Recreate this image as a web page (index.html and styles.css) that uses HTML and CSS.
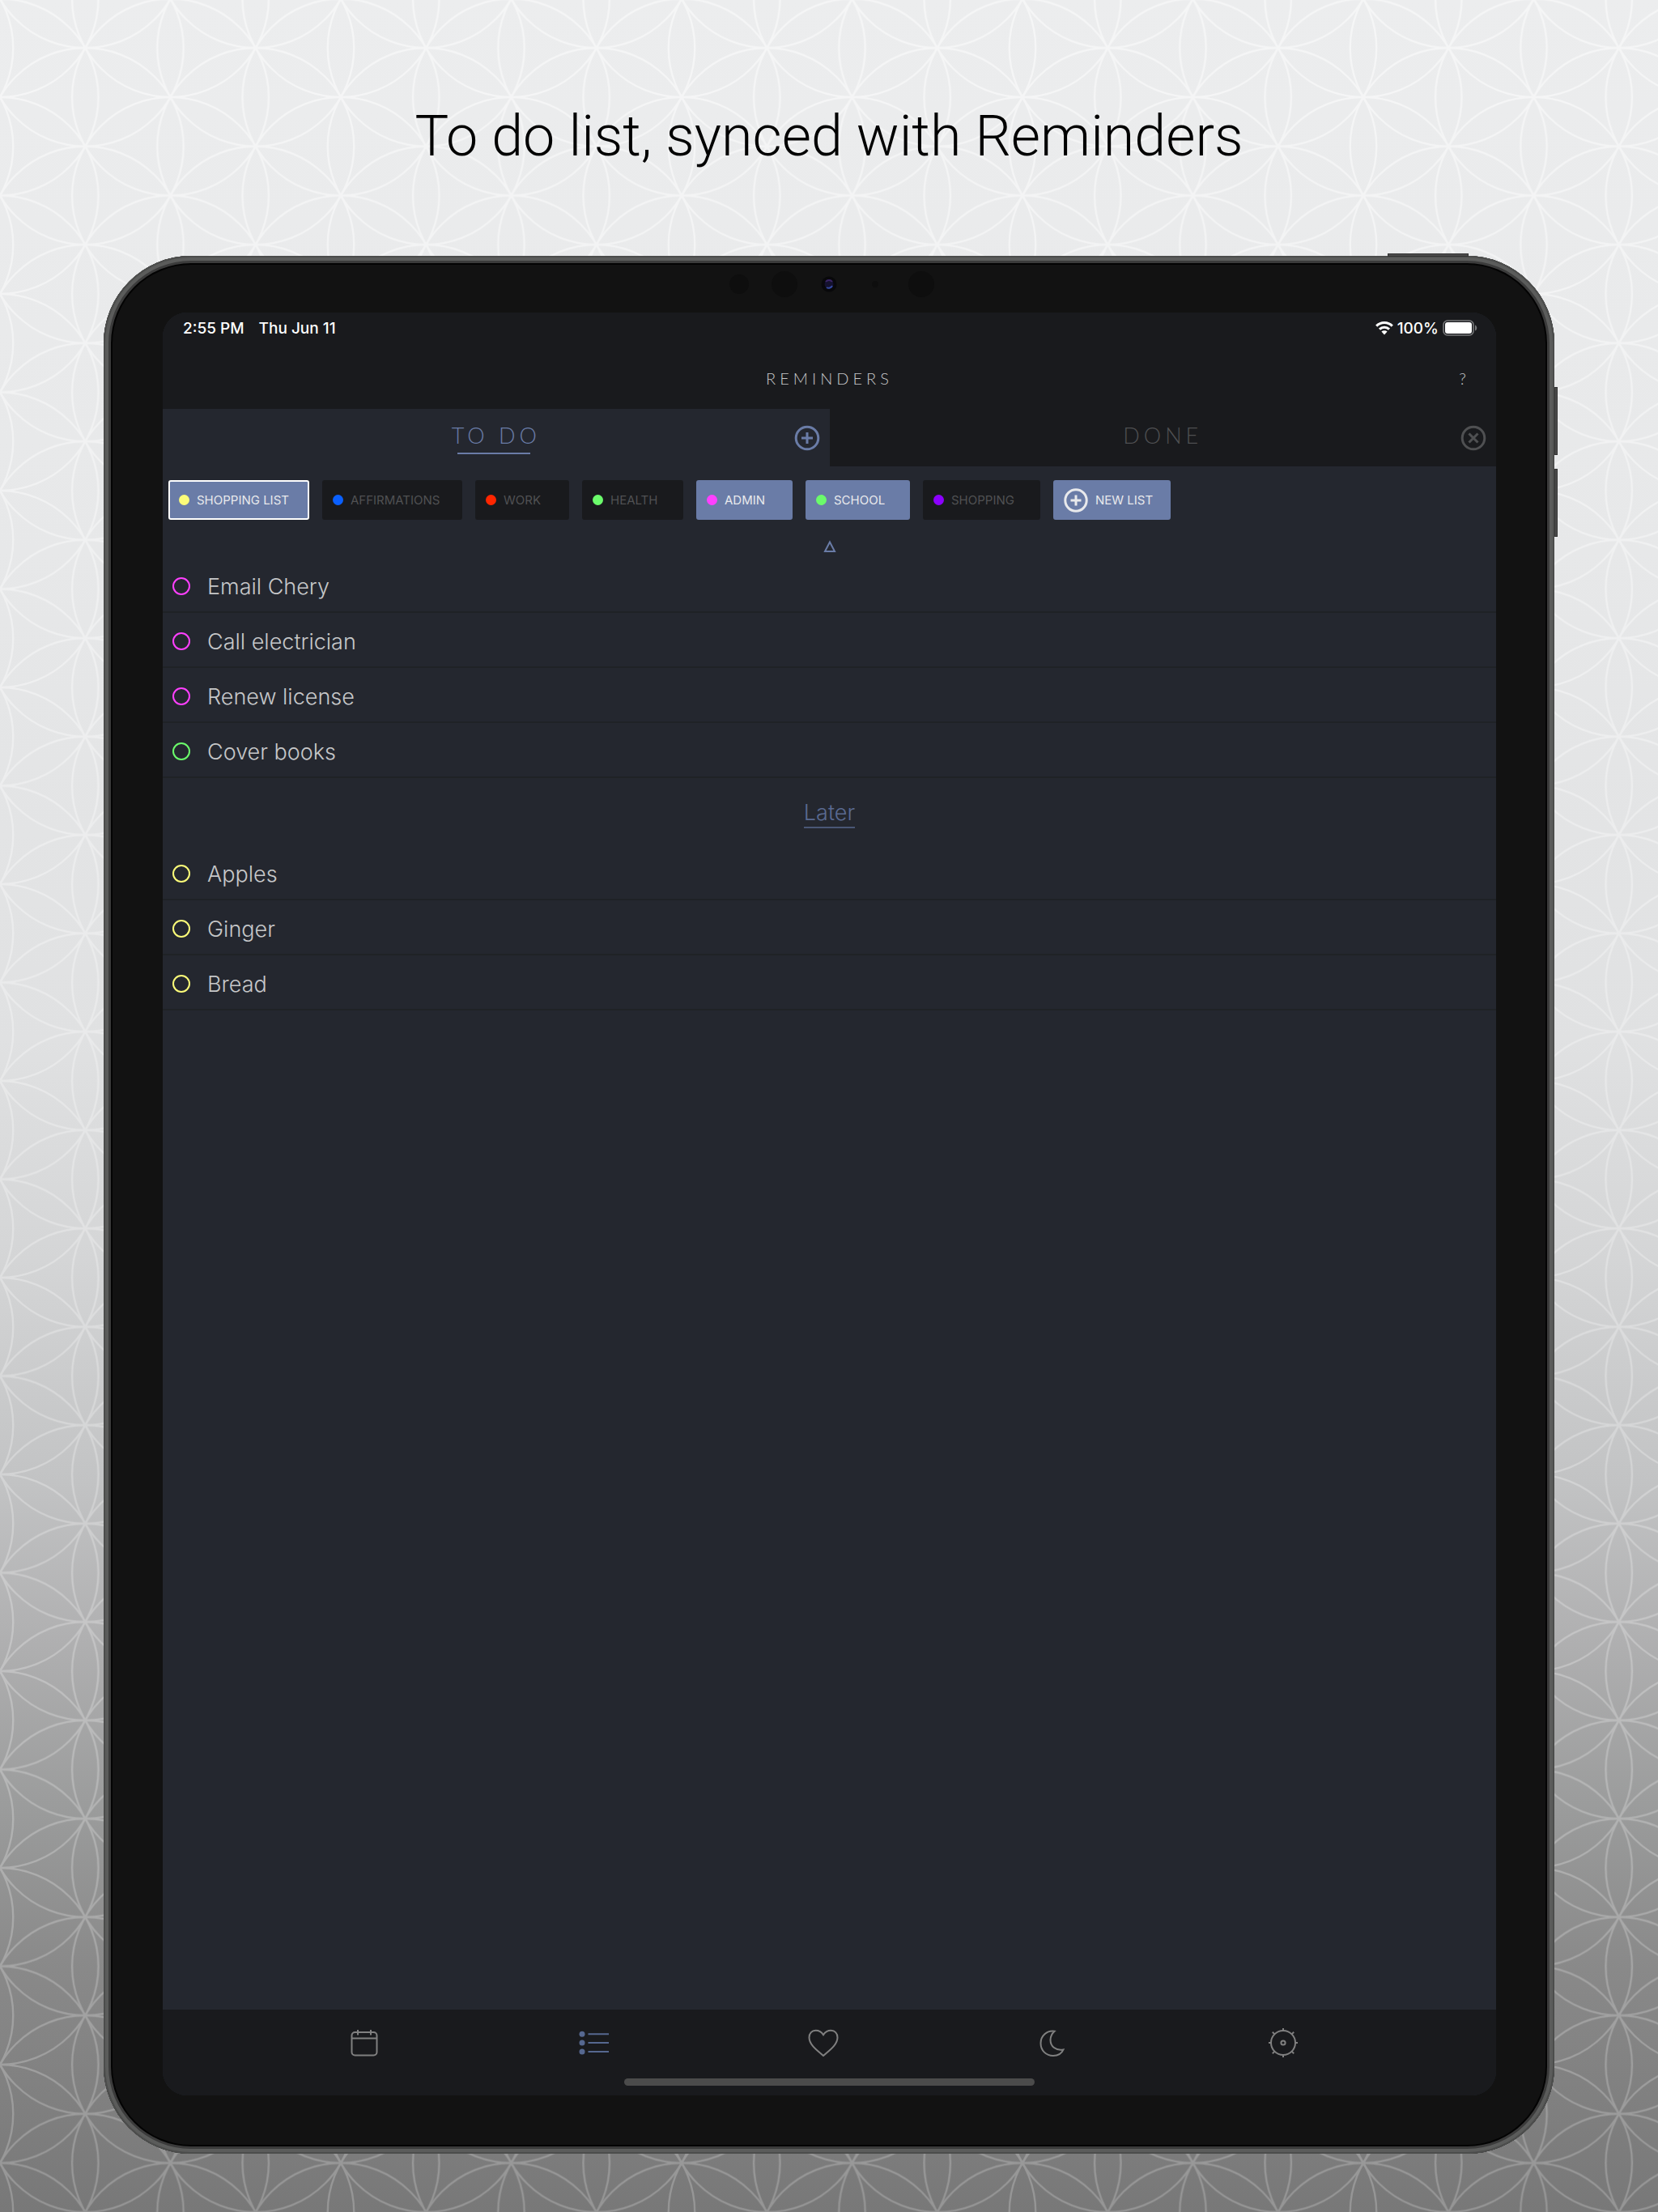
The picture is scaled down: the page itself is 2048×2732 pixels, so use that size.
FILE: index.html
```html
<!DOCTYPE html>
<html lang="en">
<head>
    <meta charset="utf-8">
    <title>Reminders</title>
    <link rel="stylesheet" href="styles.css">
</head>
<body>
    <svg class="backdrop" aria-hidden="true">
        <defs>
            <!-- flower of life: circles of radius 121.5 centred on a hex grid -->
            <pattern id="petals" width="210.5" height="121.5" patternUnits="userSpaceOnUse" y="-1.5">
                <g fill="none" stroke="#fff" stroke-width="2.4">
                    <circle cx="0" cy="0" r="121.5"/>
                    <circle cx="0" cy="121.5" r="121.5"/>
                    <circle cx="210.5" cy="0" r="121.5"/>
                    <circle cx="210.5" cy="121.5" r="121.5"/>
                    <circle cx="105.25" cy="-60.75" r="121.5"/>
                    <circle cx="105.25" cy="60.75" r="121.5"/>
                    <circle cx="105.25" cy="182.25" r="121.5"/>
                    <circle cx="-105.25" cy="-60.75" r="121.5"/>
                    <circle cx="-105.25" cy="60.75" r="121.5"/>
                    <circle cx="-105.25" cy="182.25" r="121.5"/>
                    <circle cx="315.75" cy="-60.75" r="121.5"/>
                    <circle cx="315.75" cy="60.75" r="121.5"/>
                    <circle cx="315.75" cy="182.25" r="121.5"/>
                </g>
            </pattern>
            <linearGradient id="petalFade" x1="0" y1="0" x2="0" y2="1">
                <stop offset="0" stop-color="#fff" stop-opacity=".5"/>
                <stop offset=".5" stop-color="#fff" stop-opacity=".3"/>
                <stop offset="1" stop-color="#fff" stop-opacity=".22"/>
            </linearGradient>
            <mask id="fade"><rect width="100%" height="100%" fill="url(#petalFade)"/></mask>
        </defs>
        <rect width="100%" height="100%" fill="url(#petals)" mask="url(#fade)"/>
    </svg>

    <h1 class="headline">To do list, synced with Reminders</h1>

    <div class="tablet">
        <span class="key key-power"></span>
        <span class="key key-up"></span>
        <span class="key key-down"></span>
        <svg class="sensors" width="260" height="40" viewBox="894 331 260 40" aria-hidden="true">
            <g fill="#0e0e0e">
                <circle cx="913" cy="351" r="12"/>
                <circle cx="969" cy="351" r="16"/>
                <circle cx="1081" cy="351" r="4"/>
                <circle cx="1138" cy="351" r="16"/>
            </g>
            <circle cx="1024" cy="351" r="9.5" fill="#08080a"/>
            <circle cx="1024" cy="351" r="5.5" fill="#14112e"/>
            <path d="M1020 348a5 5 0 0 1 8 0" fill="none" stroke="#3a2466" stroke-width="2"/>
            <path d="M1021 355a5 5 0 0 0 7-2" fill="none" stroke="#3348a0" stroke-width="2"/>
        </svg>

        <div class="screen">
            <div class="status">
                <span>2:55 PM</span>
                <span>Thu Jun 11</span>
                <span class="status-right">
                    <svg width="22" height="18" viewBox="0 0 22 18" aria-hidden="true">
                        <g fill="none" stroke="#fff" stroke-width="3">
                            <path d="M1.2 6.6a13.8 13.8 0 0 1 19.6 0"/>
                            <path d="M5 10.6a8.6 8.6 0 0 1 12 0"/>
                        </g>
                        <path d="M11 17.4l-3.6-3.8a5.2 5.2 0 0 1 7.2 0z" fill="#fff"/>
                    </svg>
                    <span>100%</span>
                    <svg width="43" height="20" viewBox="0 0 43 20" aria-hidden="true">
                        <rect x="1" y="1" width="37" height="18" rx="5" fill="none" stroke="#77787a" stroke-width="1.6"/>
                        <rect x="3" y="3" width="33" height="14" rx="3" fill="#fff"/>
                        <path d="M40 6.5c3 1 3 6 0 7z" fill="#77787a"/>
                    </svg>
                </span>
            </div>

            <header class="titlebar">
                <h2 class="title">REMINDERS</h2>
                <button type="button" class="help" aria-label="Help">?</button>
            </header>

            <div class="tabs">
                <div class="tab tab-active">
                    <button type="button" class="tab-name">TO DO</button>
                    <button type="button" class="tab-action" aria-label="Add reminder">
                        <svg width="32" height="32" viewBox="0 0 32 32"><circle cx="16" cy="16" r="13.8"/><path d="M16 9v14M9 16h14"/></svg>
                    </button>
                </div>
                <div class="tab">
                    <button type="button" class="tab-name">DONE</button>
                    <button type="button" class="tab-action" aria-label="Clear done">
                        <svg width="32" height="32" viewBox="0 0 32 32"><circle cx="16" cy="16" r="13.8"/><path d="M10.5 10.5l11 11M21.5 10.5l-11 11"/></svg>
                    </button>
                </div>
            </div>

            <div class="lists">
                <button type="button" class="chip on current"><i class="dot yellow"></i>SHOPPING LIST</button>
                <button type="button" class="chip"><i class="dot blue"></i>AFFIRMATIONS</button>
                <button type="button" class="chip"><i class="dot red"></i>WORK</button>
                <button type="button" class="chip"><i class="dot green"></i>HEALTH</button>
                <button type="button" class="chip on"><i class="dot pink"></i>ADMIN</button>
                <button type="button" class="chip on"><i class="dot green"></i>SCHOOL</button>
                <button type="button" class="chip"><i class="dot purple"></i>SHOPPING</button>
                <button type="button" class="chip on">
                    <svg width="30" height="30" viewBox="0 0 30 30"><circle cx="15" cy="15" r="13.2"/><path d="M15 8.500v13M8.500 15h13"/></svg>NEW LIST
                </button>
            </div>

            <button type="button" class="collapse" aria-label="Hide lists">
                <svg width="16" height="16" viewBox="0 0 16 16"><path d="M8 2.500L14 14H2z"/></svg>
            </button>

            <main class="items">
                <label class="item"><input type="checkbox" class="ring pink">Email Chery</label>
                <label class="item"><input type="checkbox" class="ring pink">Call electrician</label>
                <label class="item"><input type="checkbox" class="ring pink">Renew license</label>
                <label class="item"><input type="checkbox" class="ring green">Cover books</label>
                <h3 class="later"><span>Later</span></h3>
                <label class="item"><input type="checkbox" class="ring yellow">Apples</label>
                <label class="item"><input type="checkbox" class="ring yellow">Ginger</label>
                <label class="item"><input type="checkbox" class="ring yellow">Bread</label>
            </main>

            <footer class="bottom">
                <nav class="nav">
                    <a href="#calendar" aria-label="Calendar">
                        <svg width="40" height="40" viewBox="0 0 40 40"><rect x="4.500" y="7" width="31" height="28.500" rx="4"/><path d="M4.500 14.500h31M12 4v6.500M28 4v6.500"/></svg>
                    </a>
                    <a href="#reminders" aria-label="Reminders" class="nav-on">
                        <svg width="40" height="40" viewBox="0 0 40 40"><path d="M12.500 9.300h25.500M12.500 20h25.500M12.500 30.900h25.500"/><g class="bullets"><circle cx="5" cy="9.300" r="3.500"/><circle cx="5" cy="20" r="3.500"/><circle cx="5" cy="30.900" r="3.500"/></g></svg>
                    </a>
                    <a href="#gratitude" aria-label="Gratitude">
                        <svg width="40" height="40" viewBox="0 0 40 40"><path d="M20 36C14 30.500 2.500 23 2.500 13.500 2.500 8 6 4.800 10.500 4.800c4.500 0 7.500 2.200 9.500 5.400 2-3.200 5-5.400 9.500-5.400 4.500 0 8 3.200 8 8.700C37.500 23 26 30.500 20 36z"/></svg>
                    </a>
                    <a href="#moon" aria-label="Moon">
                        <svg width="40" height="40" viewBox="0 0 40 40"><path d="M21.500 5.700C12 4.500 4.500 11.500 4.500 20.500S11 36 20 36c6 0 10.500-3 12.500-7.600C23 30 16.500 24.500 16.500 16.500c0-4.500 2-8 5-10.800z"/></svg>
                    </a>
                    <a href="#settings" aria-label="Settings">
                        <svg width="40" height="40" viewBox="0 0 40 40"><circle cx="20" cy="20" r="15"/><circle cx="20" cy="20" r="2.600"/><path d="M20 2V5M20 35v3M2 20H5M35 20h3M6.800 6.800l2.600 2.600M30.600 30.600l2.600 2.600M33.200 6.800l-2.600 2.600M9.400 30.600l-2.600 2.600"/></svg>
                    </a>
                </nav>
                <div class="home"></div>
            </footer>
        </div>
    </div>
</body>
</html>
```

FILE: styles.css
```css
* {box-sizing: border-box;}
body {margin: 0; min-height: 100vh; padding: 0 128px 72px; display: flex; flex-direction: column; position: relative; font-family: Inter, "Noto Sans", sans-serif; background: linear-gradient(#ecedee 0%, #e7e8e9 25%, #e0e1e2 47%, #d4d5d6 57%, #c2c3c4 67%, #b0b0b1 74%, #9a9b9b 82%, #898989 89%, #787878 100%);}
h1, h2, h3 {margin: 0; font-weight: 300;}
button {margin: 0; padding: 0; border: none; background: none; color: inherit; font: inherit; cursor: pointer;}
svg {display: block;}

.backdrop {position: absolute; top: 0; left: 0; width: 100%; height: 100%; z-index: -1;}
.headline {height: 316px; padding-top: 126px; font: 300 70px/84px Roboto, sans-serif; color: #000; text-align: center;}

/* tablet */
.tablet {position: relative; flex: 1; display: flex; padding: 70px 72px 72px 73px; border-radius: 108px; background: #121212; box-shadow: inset 0 0 0 2px #4c4d4c, inset 0 0 0 6px #5b5c5b, inset 0 0 0 9px #3b3b3b, inset 0 0 0 11px #030303;}
.key {position: absolute; background: #4b4b4b; border: 1px solid #333;}
.key-power {top: -3px; right: 106px; width: 100px; height: 4px;}
.key-up, .key-down {right: -4px; width: 4px; height: 84px;}
.key-up {top: 162px;}
.key-down {top: 263px;}
.sensors {position: absolute; top: 15px; left: 50%; margin-left: -130px;}
.screen {flex: 1; display: flex; flex-direction: column; overflow: hidden; border-radius: 30px; background: #24272f; color: #c6c7c9;}

/* top bars */
.status {display: flex; align-items: center; gap: 18px; height: 38px; padding: 0 23px 0 25px; background: #191a1d; color: #fff; font-size: 19px; font-weight: 500;}
.status-right {display: flex; align-items: center; gap: 5px; margin-left: auto;}
.titlebar {display: grid; grid-template-columns: 1fr auto 1fr; align-items: center; height: 81px; padding: 5px 37px 0; background: #191a1d; font-family: Lato, sans-serif;}
.title {grid-column: 2; font-size: 20px; letter-spacing: 5px;}
.help {justify-self: end; font-size: 20px; font-weight: 300;}
.tabs {display: grid; grid-template-columns: 1fr 1fr;}
.tab {display: flex; align-items: center; height: 71px; padding: 0 12px 0 44px; background: #191a1d; color: #4f5052; font-family: Lato, sans-serif;}
.tab-active {background: #24272f; color: #6a7ca7;}
.tab-name {flex: 1; display: flex; flex-direction: column; align-items: center; height: 100%; padding-top: 15px; font-size: 27px; font-weight: 300; line-height: 36px; letter-spacing: 5px;}
.tab-active .tab-name::after {content: ""; width: 90px; height: 2px; margin: 3px 5px 0 0; background: #6a7ca7;}
.tab svg, .chip svg {fill: none; stroke: currentColor; stroke-width: 3;}

/* list filter */
.lists {display: grid; grid-template-columns: 174px 173px 116px 125px 119px 129px 145px 145px; gap: 16px; padding: 17px 7px 0;}
.chip {display: flex; align-items: center; gap: 9px; height: 49px; padding-left: 11px; border: 2px solid #191a1d; border-radius: 3px; background: #191a1d; color: #505153; font-size: 15px; white-space: nowrap;}
.on {border-color: #6a7ca7; background: #6a7ca7; color: #e8e9ec;}
.current {border-color: #fff;}
.dot {width: 13px; height: 13px; border-radius: 50%; background: currentColor;}
.yellow {color: #fcfc79;}
.blue {color: #0a60ff;}
.red {color: #ff2600;}
.green {color: #6bfb6b;}
.pink {color: #ff40ff;}
.purple {color: #8c00ff;}
.collapse {align-self: center; height: 47px; padding-top: 18px;}
.collapse svg {fill: none; stroke: #6a7ca7; stroke-width: 2;}

/* reminders */
.items {flex: 1;}
.item {display: flex; align-items: center; gap: 21px; height: 68px; padding: 4px 0 0 12px; border-bottom: 2px solid #1f2226; font-size: 27px; font-weight: 300;}
.ring {appearance: none; width: 22px; height: 22px; margin: 0; border: 2px solid currentColor; border-radius: 50%;}
.later {height: 83px; padding-top: 26px; text-align: center; font-size: 27px; line-height: 34px; color: #5a6a91;}
.later span {display: inline-block; border-bottom: 2px solid #4a5776;}

/* bottom bar */
.bottom {height: 106px; padding-top: 21px; background: #191a1d;}
.nav {display: flex; padding: 0 121px 0 107px;}
.nav a {flex: 1; display: flex; justify-content: center; color: #808080;}
.nav svg {fill: none; stroke: currentColor; stroke-width: 2;}
.nav .nav-on {color: #566890;}
.nav .bullets {fill: currentColor; stroke: none;}
.home {width: 507px; height: 9px; margin: 24px auto 0; border-radius: 5px; background: #4b4b4b;}
```
